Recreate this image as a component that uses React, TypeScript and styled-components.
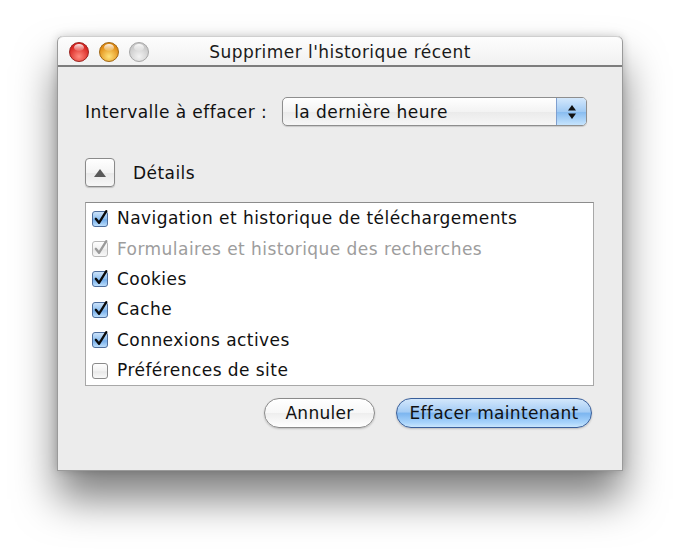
import React from "react";
import styled, { createGlobalStyle } from "styled-components";

const Global = createGlobalStyle`
  html, body { margin: 0; padding: 0; background: #ffffff; }
  body { font-family: "DejaVu Sans", "Liberation Sans", sans-serif; }
`;

const Page = styled.div`
  width: 680px;
  height: 549px;
  background: #ffffff;
  padding: 36px 0 0 57px;
  box-sizing: border-box;
`;

const Window = styled.div`
  width: 566px;
  height: 435px;
  display: flex;
  flex-direction: column;
  background: #ececec;
  border: 1px solid #9a9a9a;
  border-top: none;
  border-radius: 6px 6px 0 0;
  box-sizing: border-box;
  box-shadow: 0 28px 42px rgba(0, 0, 0, 0.5), 0 0 10px rgba(0, 0, 0, 0.18);
`;

const TitleBar = styled.div`
  height: 31px;
  flex: none;
  display: flex;
  align-items: center;
  position: relative;
  background: linear-gradient(#fdfdfd, #f1f1f1);
  border-bottom: 2px solid #7d7d7d;
  border-radius: 6px 6px 0 0;
  box-sizing: border-box;
  padding-left: 11px;
  border-top: 1px solid #cfcfcf;
`;

const Lights = styled.div`
  display: flex;
  gap: 10px;
  margin-top: 1px;
`;

const Light = styled.div<{ $c: string; $hi: string; $edge: string }>`
  width: 20px;
  height: 20px;
  border-radius: 50%;
  box-sizing: border-box;
  border: 1px solid ${(p) => p.$edge};
  background: radial-gradient(circle at 50% 75%, ${(p) => p.$hi} 0%, ${(p) => p.$c} 70%),
    ${(p) => p.$c};
  position: relative;
  &::after {
    content: "";
    position: absolute;
    left: 4px;
    top: 1px;
    width: 10px;
    height: 7px;
    border-radius: 50%;
    background: linear-gradient(rgba(255, 255, 255, 0.9), rgba(255, 255, 255, 0.1));
  }
`;

const Title = styled.div`
  position: absolute;
  left: 0;
  right: 0;
  text-align: center;
  font-size: 17px;
  letter-spacing: 0.45px;
  color: #1a1a1a;
  pointer-events: none;
  margin-top: 1px;
`;

const Body = styled.div`
  flex: 1;
  display: flex;
  flex-direction: column;
  padding: 30px 28px 0 27px;
`;

const Row = styled.div`
  display: flex;
  align-items: center;
`;

const Label = styled.span<{ $color?: string }>`
  font-size: 17px;
  letter-spacing: 0.45px;
  color: ${(p) => p.$color || "#111"};
  white-space: nowrap;
`;

const Select = styled.div`
  margin-left: 15px;
  width: 305px;
  height: 29px;
  box-sizing: border-box;
  border: 1px solid #8e8e8e;
  border-radius: 5px;
  display: flex;
  overflow: hidden;
  background: linear-gradient(#ffffff, #f3f3f3 50%, #eaeaea 51%, #f6f6f6);
  box-shadow: 0 1px 1px rgba(0, 0, 0, 0.15);
`;

const SelectText = styled.div`
  flex: 1;
  padding-left: 11px;
  display: flex;
  align-items: center;
  font-size: 17px;
  letter-spacing: 0.45px;
  color: #111;
`;

const Stepper = styled.div`
  width: 29px;
  border-left: 1px solid #7f9fcf;
  background: linear-gradient(#d4e8fc, #a2cbf4 50%, #86bbf0 51%, #c6e4fd);
  display: flex;
  align-items: center;
  justify-content: center;
`;

const DetailsRow = styled(Row)`
  margin-top: 32px;
  gap: 18px;
`;

const Disclosure = styled.div`
  width: 30px;
  height: 29px;
  box-sizing: border-box;
  border: 1px solid #8a8a8a;
  border-radius: 4px;
  background: linear-gradient(#ffffff, #f4f4f4 50%, #e9e9e9 51%, #f7f7f7);
  box-shadow: 0 1px 1px rgba(0, 0, 0, 0.18);
  display: flex;
  align-items: center;
  justify-content: center;
`;

const List = styled.div`
  margin-top: 15px;
  height: 184px;
  flex: none;
  background: #ffffff;
  border: 1px solid #a8a8a8;
  border-top-color: #8c8c8c;
  box-sizing: border-box;
  display: flex;
  flex-direction: column;
  padding: 0 0 0 6px;
`;

const Item = styled.div`
  height: 30.4px;
  flex: none;
  display: flex;
  align-items: center;
  gap: 8px;
`;

const Buttons = styled.div`
  margin-top: 12px;
  display: flex;
  justify-content: flex-end;
  gap: 21px;
  padding-right: 2px;
`;

const Pill = styled.div<{ $primary?: boolean; $w: number }>`
  width: ${(p) => p.$w}px;
  height: 30px;
  box-sizing: border-box;
  border-radius: 15px;
  display: flex;
  align-items: center;
  justify-content: center;
  font-size: 17px;
  letter-spacing: 0.3px;
  color: #111;
  border: 1px solid ${(p) => (p.$primary ? "#3a5f9a" : "#8a8a8a")};
  background: ${(p) =>
    p.$primary
      ? "linear-gradient(#d3e7fb, #a6cdf5 45%, #7db6f0 52%, #a9d4fb 85%, #c9e6fd)"
      : "linear-gradient(#ffffff, #f7f7f7 50%, #eeeeee 51%, #ffffff)"};
  box-shadow: 0 1px 2px rgba(0, 0, 0, 0.2);
`;

const CheckBox = ({ checked, disabled }: { checked: boolean; disabled?: boolean }) => (
  <svg width="17" height="17" viewBox="0 0 17 17">
    <defs>
      <linearGradient id="cbBlue" x1="0" y1="0" x2="0" y2="1">
        <stop offset="0" stopColor="#cfe4fa" />
        <stop offset="0.5" stopColor="#8fc0f0" />
        <stop offset="0.55" stopColor="#74adea" />
        <stop offset="1" stopColor="#c2e2fd" />
      </linearGradient>
      <linearGradient id="cbWhite" x1="0" y1="0" x2="0" y2="1">
        <stop offset="0" stopColor="#ffffff" />
        <stop offset="0.5" stopColor="#f1f1f1" />
        <stop offset="0.55" stopColor="#e8e8e8" />
        <stop offset="1" stopColor="#fafafa" />
      </linearGradient>
    </defs>
    <rect
      x="0.5"
      y="1.5"
      width="15"
      height="15"
      rx="2.5"
      fill={checked && !disabled ? "url(#cbBlue)" : "url(#cbWhite)"}
      stroke={disabled ? "#b9b9b9" : checked ? "#4d6d9c" : "#8a8a8a"}
    />
    {checked && (
      <path
        d="M3.8 8.8 L7 12.8 L14.3 1.2"
        fill="none"
        stroke={disabled ? "#9a9a9a" : "#0a0a0a"}
        strokeWidth="2.3"
        strokeLinecap="round"
        strokeLinejoin="round"
      />
    )}
  </svg>
);

const items: { label: string; checked: boolean; disabled?: boolean }[] = [
  { label: "Navigation et historique de téléchargements", checked: true },
  { label: "Formulaires et historique des recherches", checked: true, disabled: true },
  { label: "Cookies", checked: true },
  { label: "Cache", checked: true },
  { label: "Connexions actives", checked: true },
  { label: "Préférences de site", checked: false },
];

export default function App() {
  return (
    <>
      <Global />
      <Page>
        <Window>
          <TitleBar>
            <Lights>
              <Light $c="#d8231f" $hi="#ff8a7e" $edge="#9a2a26" />
              <Light $c="#e08a12" $hi="#ffe27a" $edge="#a06a1c" />
              <Light $c="#c9c9c9" $hi="#f2f2f2" $edge="#a8a8a8" />
            </Lights>
            <Title>Supprimer l'historique récent</Title>
          </TitleBar>
          <Body>
            <Row>
              <Label>Intervalle à effacer :</Label>
              <Select>
                <SelectText>la dernière heure</SelectText>
                <Stepper>
                  <svg width="10" height="18" viewBox="0 0 10 18">
                    <path d="M5 2 L9 7.5 L1 7.5 Z" fill="#111" />
                    <path d="M5 16 L9 10.5 L1 10.5 Z" fill="#111" />
                  </svg>
                </Stepper>
              </Select>
            </Row>
            <DetailsRow>
              <Disclosure>
                <svg width="14" height="10" viewBox="0 0 14 10">
                  <path d="M7 1 L13 9 L1 9 Z" fill="#5a5a5a" />
                </svg>
              </Disclosure>
              <Label>Détails</Label>
            </DetailsRow>
            <List>
              {items.map((it) => (
                <Item key={it.label}>
                  <CheckBox checked={it.checked} disabled={it.disabled} />
                  <Label $color={it.disabled ? "#9d9d9d" : "#111"}>{it.label}</Label>
                </Item>
              ))}
            </List>
            <Buttons>
              <Pill $w={111}>Annuler</Pill>
              <Pill $w={196} $primary>
                Effacer maintenant
              </Pill>
            </Buttons>
          </Body>
        </Window>
      </Page>
    </>
  );
}
